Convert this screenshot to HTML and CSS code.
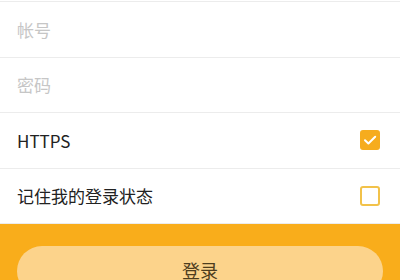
FILE: index.html
```html
<!DOCTYPE html>
<html lang="zh-CN">
<head>
    <meta charset="UTF-8">
    <meta name="viewport" content="width=device-width, initial-scale=1.0">
    <title>登录</title>
    <link rel="stylesheet" href="styles.css">
</head>
<body>
    <div class="form">
        <div class="row">
            <input type="text" class="field" placeholder="帐号">
        </div>
        <div class="row">
            <input type="password" class="field" placeholder="密码">
        </div>
        <div class="row">
            <span class="label">HTTPS</span>
            <span class="check checked">
                <svg viewBox="0 0 20 20" width="20" height="20"><path d="M5 10.2l3.4 3.3L15.2 6.8" fill="none" stroke="#fff" stroke-width="2" stroke-linecap="round" stroke-linejoin="round"/></svg>
            </span>
        </div>
        <div class="row">
            <span class="label">记住我的登录状态</span>
            <span class="check"></span>
        </div>
    </div>
    <div class="footer">
        <button type="button" class="btn">登录</button>
    </div>
</body>
</html>
```

FILE: styles.css
```css
* { margin: 0; padding: 0; box-sizing: border-box; }
body {
    font-family: "Noto Sans CJK SC", "Noto Sans", sans-serif;
    background: #fff;
    width: 400px; height: 280px; overflow: hidden;
}
.form { border-top: 1px solid #ececec; margin-top: 1px; }
.row {
    height: 55.5px; padding: 0 20px 0 17px;
    display: flex; align-items: center; justify-content: space-between;
    border-bottom: 1px solid #ececec;
}
.field {
    width: 100%; border: none; outline: none; background: transparent;
    font-family: inherit; font-size: 17px; color: #222;
}
.field::placeholder { color: #c6c6c6; }
.label { font-size: 17px; color: #222; }
.check {
    width: 20px; height: 20px; border-radius: 3px;
    border: 2px solid #f2c24a; display: flex;
}
.check.checked { background: #f6ac1e; border-color: #f6ac1e; }
.check svg { margin: -2px; }
.footer { background: #f9ad1b; padding: 22px 17px 0; height: 80px; }
.btn {
    width: 100%; height: 50px; border: none; border-radius: 25px;
    background: #fcd38b; color: #4e3d1e;
    font-family: inherit; font-size: 18px; line-height: 24px;
    display: flex; justify-content: center; padding-top: 12px;
}
```
